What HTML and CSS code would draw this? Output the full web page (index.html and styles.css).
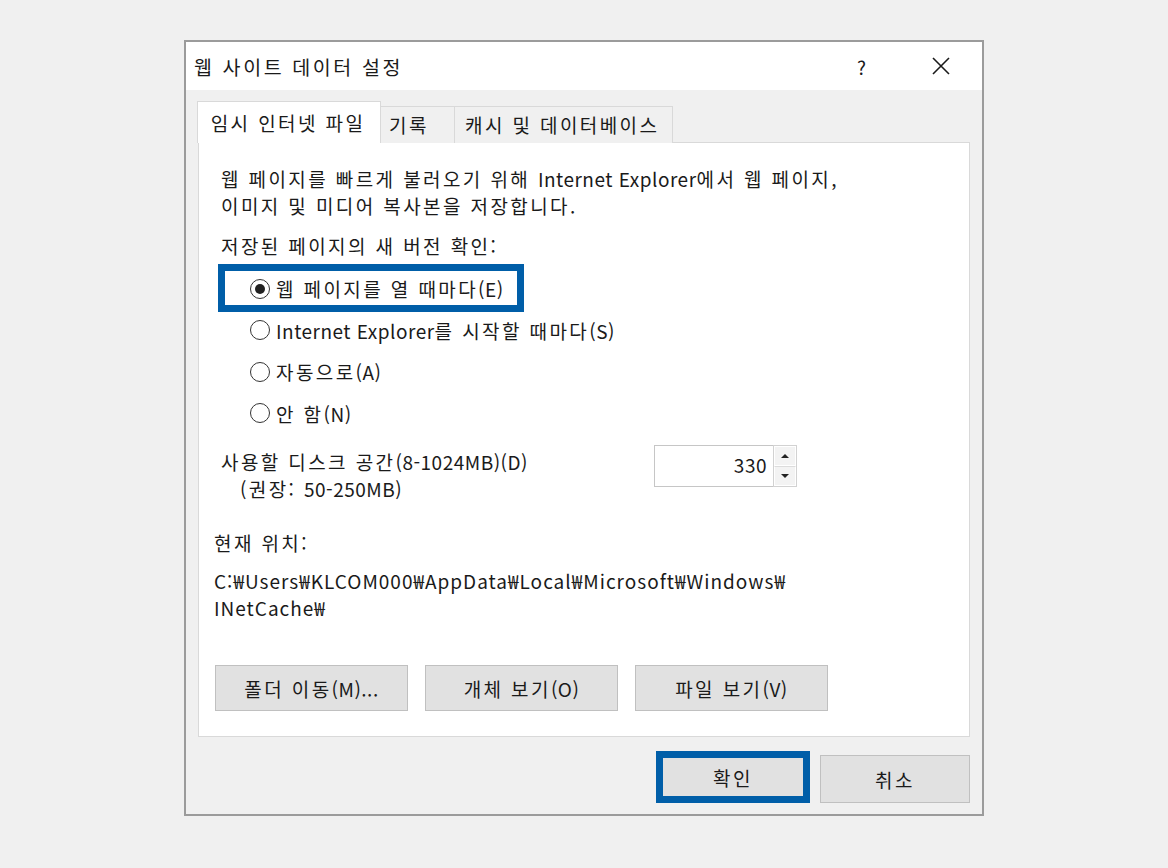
FILE: index.html
```html
<!DOCTYPE html>
<html lang="ko">
<head>
<meta charset="utf-8">
<title>웹 사이트 데이터 설정</title>
<link rel="stylesheet" href="styles.css">
</head>
<body>
<div class="dialog">
  <div class="titlebar">
    <span class="title">웹 사이트 데이터 설정</span>
    <span class="help">?</span>
    <span class="close"><svg width="18" height="18" viewBox="0 0 18 18"><path d="M1 1 L17 17 M17 1 L1 17" stroke="#1a1a1a" stroke-width="1.6" fill="none"/></svg></span>
  </div>
  <div class="body">
    <div class="tabs">
      <div class="tab active">임시 인터넷 파일</div>
      <div class="tab t2">기록</div>
      <div class="tab t3">캐시 및 데이터베이스</div>
    </div>
    <div class="panel">
      <p class="desc">웹 페이지를 빠르게 불러오기 위해 <span class="lt">Internet Explorer</span>에서 웹 페이지,<br>이미지 및 미디어 복사본을 저장합니다.</p>
      <div class="label">저장된 페이지의 새 버전 확인:</div>
      <div class="radios">
        <div class="radio-row highlight"><span class="radio checked"></span>웹 페이지를 열 때마다<span class="lt">(E)</span></div>
        <div class="radio-row"><span class="radio"></span><span class="lt">Internet Explorer</span>를 시작할 때마다<span class="lt">(S)</span></div>
        <div class="radio-row"><span class="radio"></span>자동으로<span class="lt">(A)</span></div>
        <div class="radio-row"><span class="radio"></span>안 함<span class="lt">(N)</span></div>
      </div>
      <div class="disk">
        <div class="disk-label">
          <div>사용할 디스크 공간<span class="lt">(8-1024MB)(D)</span></div>
          <div class="indent">(권장: <span class="lt">50-250MB)</span></div>
        </div>
        <div class="spin">
          <div class="spin-input">330</div>
          <div class="spin-btns">
            <div class="spin-btn"><span class="tri-up"></span></div>
            <div class="spin-btn"><span class="tri-down"></span></div>
          </div>
        </div>
      </div>
      <div class="loc-label">현재 위치:</div>
      <div class="path">C:₩Users₩KLCOM000₩AppData₩Local₩Microsoft₩Windows₩<br>INetCache₩</div>
      <div class="actions">
        <button class="btn">폴더 이동<span class="lt">(M)...</span></button>
        <button class="btn">개체 보기<span class="lt">(O)</span></button>
        <button class="btn">파일 보기<span class="lt">(V)</span></button>
      </div>
    </div>
    <div class="footer">
      <button class="btn ok">확인</button>
      <button class="btn cancel">취소</button>
    </div>
  </div>
</div>
</body>
</html>
```
FILE: styles.css
```css
*, *::before, *::after { box-sizing: border-box; }
html, body { margin: 0; padding: 0; }
body {
  background: #f0f0f0;
  font-family: "Noto Sans CJK KR", "Noto Sans", sans-serif;
  font-size: 19px;
  letter-spacing: 2.4px;
  color: #1a1a1a;
  width: 1168px;
  height: 868px;
  overflow: hidden;
}
.lt { letter-spacing: 0.5px; }
.dialog {
  margin: 40px 0 0 184px;
  width: 800px;
  height: 776px;
  border: 2px solid #9b9b9b;
  background: #f0f0f0;
  display: flex;
  flex-direction: column;
}
.titlebar {
  height: 48px;
  background: #fff;
  display: flex;
  align-items: center;
  padding-left: 8px;
  flex-shrink: 0;
}
.title { flex: 1; font-size: 19.5px; letter-spacing: 2.6px; }
.help { width: 20px; margin-right: 55px; font-size: 19px; letter-spacing: 0; }
.close { width: 18px; height: 18px; margin-right: 32px; display: flex; }
.body {
  flex: 1;
  padding: 11px 12px 9px 12px;
  display: flex;
  flex-direction: column;
}
.tabs {
  display: flex;
  align-items: flex-end;
  height: 42px;
  margin-left: -1px;
  position: relative;
  z-index: 1;
  margin-bottom: -1px;
}
.tab {
  height: 37px;
  line-height: 35px;
  border: 1px solid #d9d9d9;
  border-bottom: none;
  background: #f0f0f0;
  white-space: nowrap;
}
.tab.active {
  height: 42px;
  width: 184px;
  line-height: 42px;
  background: #fff;
  text-align: center;
  padding-right: 2px;
}
.tab.t2 { width: 74px; padding-left: 8px; border-left: none; }
.tab.t3 { width: 218px; padding-left: 10px; border-left: none; }
.panel {
  height: 595px;
  border: 1px solid #d9d9d9;
  background: #fff;
  padding-top: 22px;
  display: flex;
  flex-direction: column;
}
.desc {
  margin: 0;
  padding-left: 22px;
  line-height: 27px;
  white-space: nowrap;
}
.label {
  margin-top: 13px;
  padding-left: 22px;
  line-height: 27px;
}
.radios { margin-top: 9px; }
.radio-row {
  height: 41.5px;
  display: flex;
  align-items: center;
  padding-left: 51px;
  position: relative;
  white-space: nowrap;
}
.radio {
  width: 20px;
  height: 20px;
  border: 1.5px solid #333;
  border-radius: 50%;
  margin-right: 6px;
  flex-shrink: 0;
  display: flex;
  align-items: center;
  justify-content: center;
}
.radio.checked::before {
  content: "";
  width: 10px;
  height: 10px;
  border-radius: 50%;
  background: #222;
}
.highlight::after {
  content: "";
  position: absolute;
  left: 19px;
  top: -4.5px;
  width: 306px;
  height: 48px;
  border: 7px solid #005ea8;
}
.disk {
  margin-top: 14px;
  display: flex;
  align-items: flex-start;
}
.disk-label {
  width: 455px;
  padding-left: 22px;
  line-height: 27px;
  white-space: nowrap;
}
.disk-label .indent { padding-left: 19px; }
.spin {
  margin-top: -3px;
  display: flex;
  width: 143px;
  height: 42px;
}
.spin-input {
  width: 119px;
  height: 42px;
  border: 1px solid #c6c6c6;
  border-right: none;
  text-align: right;
  padding-right: 6px;
  line-height: 38px;
  letter-spacing: 0.5px;
}
.spin-btns {
  width: 24px;
  display: flex;
  flex-direction: column;
  border: 1px solid #d2d2d2;
}
.spin-btn {
  flex: 1;
  display: flex;
  align-items: center;
  justify-content: center;
  background: #f3f3f3;
  border: 1px solid #fff;
}
.spin-btn + .spin-btn { border-top: 1px solid #dcdcdc; }
.tri-up {
  width: 0; height: 0;
  border-left: 4px solid transparent;
  border-right: 4px solid transparent;
  border-bottom: 4px solid #222;
}
.tri-down {
  width: 0; height: 0;
  border-left: 4px solid transparent;
  border-right: 4px solid transparent;
  border-top: 4px solid #222;
}
.loc-label {
  margin-top: 27px;
  padding-left: 15px;
  line-height: 27px;
}
.path {
  margin-top: 11px;
  padding-left: 15px;
  line-height: 27px;
  letter-spacing: 1px;
  white-space: nowrap;
}
.actions {
  margin-top: 44px;
  padding-left: 16px;
  display: flex;
  gap: 17px;
}
.btn {
  font-family: inherit;
  font-size: 19px;
  letter-spacing: 2.4px;
  color: #1a1a1a;
  background: #e1e1e1;
  border: 1px solid #c0c0c0;
  height: 46px;
  width: 193px;
  padding: 0;
  margin: 0;
}
.footer {
  margin-top: 14px;
  display: flex;
  justify-content: flex-end;
  align-items: flex-end;
  gap: 10px;
}
.btn.ok {
  width: 154px;
  height: 52px;
  border: 7px solid #005ea8;
}
.btn.cancel {
  width: 150px;
  height: 48px;
}
```
